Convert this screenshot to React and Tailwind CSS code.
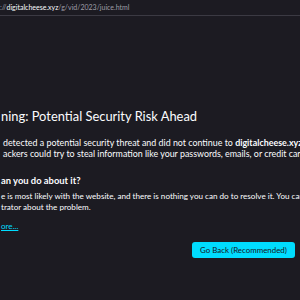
import React from "react";

const App = () => {
  return (
    <div
      className="w-[300px] h-[300px] overflow-hidden bg-[#1c1b22] text-[#fbfbfe]"
      style={{ fontFamily: 'Lato, "Noto Sans", sans-serif' }}
    >
      <div className="h-[16px] flex items-center text-[7px] whitespace-nowrap text-[#9e9ea6] border-b border-[#3b3a43] bg-[#1c1b22]">
        <span>://</span>
        <span className="text-[#fbfbfe]">digitalcheese.xyz</span>
        <span>/g/vid/2023/juice.html</span>
      </div>

      <div className="pl-[1px] whitespace-nowrap">
        <h1 className="mt-[90px] h-[20px] leading-[20px] text-[12.9px]">
          ning: Potential Security Risk Ahead
        </h1>

        <div className="mt-[11px] text-[8.9px] leading-[11px] pl-[2px]">
          <p>
            detected a potential security threat and did not continue to{" "}
            <b className="font-bold">digitalcheese.xyz</b>. If you visit this
          </p>
          <p>ackers could try to steal information like your passwords, emails, or credit card details.</p>
        </div>

        <h2 className="mt-[16px] text-[9.4px] leading-[11px] font-bold">
          an you do about it?
        </h2>

        <div className="mt-[5px] text-[8.1px] leading-[11px]">
          <p>
            e is most likely with the website, and there is nothing you can do
            to resolve it. You can notify the website's
          </p>
          <p>trator about the problem.</p>
        </div>

        <a className="block mt-[8px] text-[8.1px] leading-[11px] text-[#00ddff] underline">
          ore...
        </a>

        <div className="mt-[10px] flex">
          <button className="ml-[191px] w-[103px] h-[16px] rounded-[3px] bg-[#00ddff] text-[#15141a] text-[7.9px] leading-[16px]">
            Go Back (Recommended)
          </button>
        </div>
      </div>
    </div>
  );
};

export default App;
